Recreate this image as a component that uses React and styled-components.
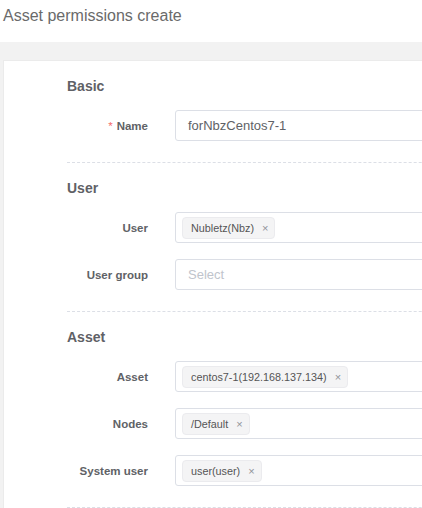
import React from "react";
import styled, { createGlobalStyle } from "styled-components";

const GlobalStyle = createGlobalStyle`
  html, body {
    margin: 0;
    padding: 0;
    background: #ffffff;
    overflow: hidden;
    font-family: "Liberation Sans", Arial, sans-serif;
  }
`;

const Page = styled.div`
  width: 422px;
  height: 508px;
  display: flex;
  flex-direction: column;
  overflow: hidden;
`;

const TitleBar = styled.div`
  height: 42px;
  box-sizing: border-box;
  padding: 7px 3px 0;
  font-size: 16px;
  line-height: 18px;
  color: #6a6a6a;
  background: #fff;
`;

const Main = styled.div`
  flex: 1;
  background: #f2f2f2;
  padding: 19px 0 0 4px;
  overflow: hidden;
`;

const Card = styled.div`
  background: #fff;
  margin-right: -60px;
  box-shadow: 0 0 0 1px #ebebeb;
  min-height: 600px;
`;

const Section = styled.div`
  margin-left: 63px;
  padding-bottom: 21px;
  border-bottom: 1px dashed #dcdfe6;
`;

const Heading = styled.div`
  padding: 15px 0 14px;
  font-size: 14px;
  line-height: 20px;
  font-weight: 700;
  color: #5f6166;
`;

const Rows = styled.div`
  display: flex;
  flex-direction: column;
  gap: 16px;
`;

const Row = styled.div`
  display: flex;
  align-items: center;
`;

const Label = styled.label`
  width: 81px;
  margin-right: 27px;
  text-align: right;
  font-size: 11.5px;
  font-weight: 700;
  color: #606266;
  white-space: nowrap;
`;

const Star = styled.span`
  color: #f56c6c;
  margin-right: 4px;
  font-weight: 400;
`;

const Field = styled.div`
  flex: 1;
  height: 31px;
  box-sizing: border-box;
  border: 1px solid #dcdfe6;
  border-radius: 3px;
  display: flex;
  align-items: center;
  padding-left: ${(p) => (p.$tags ? "6px" : "12px")};
  font-size: 13px;
  color: ${(p) => (p.$placeholder ? "#c0c4cc" : "#606266")};
`;

const Tag = styled.span`
  display: inline-flex;
  align-items: center;
  height: 22px;
  box-sizing: border-box;
  padding: 0 6px 0 8px;
  background: #f4f4f5;
  border: 1px solid #ebebee;
  border-radius: 4px;
  font-size: 10.8px;
  color: #555;
`;

const Close = styled.span`
  margin-left: 8px;
  font-size: 11px;
  color: #909399;
`;

const sections = [
  {
    title: "Basic",
    rows: [{ label: "Name", required: true, value: "forNbzCentos7-1" }],
  },
  {
    title: "User",
    rows: [
      { label: "User", tags: ["Nubletz(Nbz)"] },
      { label: "User group", placeholder: "Select" },
    ],
  },
  {
    title: "Asset",
    rows: [
      { label: "Asset", tags: ["centos7-1(192.168.137.134)"] },
      { label: "Nodes", tags: ["/Default"] },
      { label: "System user", tags: ["user(user)"] },
    ],
  },
];

export default function App() {
  return (
    <>
      <GlobalStyle />
      <Page>
        <TitleBar>Asset permissions create</TitleBar>
        <Main>
          <Card>
            {sections.map((s) => (
              <Section key={s.title}>
                <Heading>{s.title}</Heading>
                <Rows>
                  {s.rows.map((r) => (
                    <Row key={r.label}>
                      <Label>
                        {r.required && <Star>*</Star>}
                        {r.label}
                      </Label>
                      {r.tags ? (
                        <Field $tags>
                          {r.tags.map((t) => (
                            <Tag key={t}>
                              {t}
                              <Close>×</Close>
                            </Tag>
                          ))}
                        </Field>
                      ) : r.placeholder ? (
                        <Field $placeholder>{r.placeholder}</Field>
                      ) : (
                        <Field>{r.value}</Field>
                      )}
                    </Row>
                  ))}
                </Rows>
              </Section>
            ))}
          </Card>
        </Main>
      </Page>
    </>
  );
}
